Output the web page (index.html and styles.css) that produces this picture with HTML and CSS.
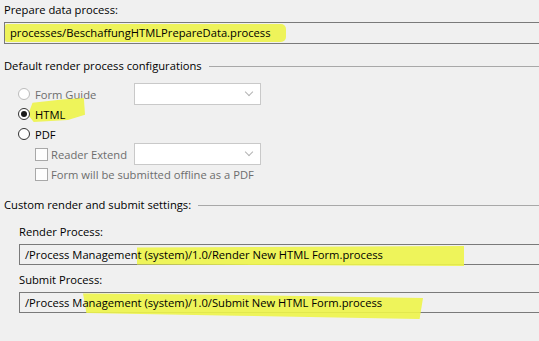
FILE: index.html
```html
<!DOCTYPE html>
<html lang="en">
<head>
    <meta charset="UTF-8">
    <title>Process settings</title>
    <link rel="stylesheet" href="styles.css">
</head>
<body>

    <main class="panel">
        <div class="label">Prepare data process:</div>
        <div class="textbox">
            <span class="mark mark-prepare"></span>
            <span class="value">processes/BeschaffungHTMLPrepareData.process</span>
        </div>

        <section class="group group-render">
            <div class="group-title"><span>Default render process configurations</span><i class="rule"></i></div>
            <div class="options">
                <div class="row">
                    <span class="radio disabled"></span>
                    <span class="opt-text disabled-text">Form Guide</span>
                    <span class="combo"><i class="chevron"></i></span>
                </div>
                <div class="row">
                    <span class="mark mark-html"></span>
                    <span class="radio checked"></span>
                    <span class="opt-text">HTML</span>
                </div>
                <div class="row">
                    <span class="radio"></span>
                    <span class="opt-text">PDF</span>
                </div>
                <div class="row sub">
                    <span class="check"></span>
                    <span class="opt-text disabled-text reader">Reader Extend</span>
                    <span class="combo"><i class="chevron"></i></span>
                </div>
                <div class="row sub">
                    <span class="check"></span>
                    <span class="opt-text disabled-text">Form will be submitted offline as a PDF</span>
                </div>
            </div>
        </section>

        <section class="group group-custom">
            <div class="group-title"><span>Custom render and submit settings:</span><i class="rule"></i></div>
            <div class="inner">
                <div class="label">Render Process:</div>
                <div class="textbox">
                    <span class="mark mark-render"></span>
                    <span class="value">/Process Management (system)/1.0/Render New HTML Form.process</span>
                </div>
                <div class="label label-submit">Submit Process:</div>
                <div class="textbox">
                    <span class="mark mark-submit"></span>
                    <span class="value">/Process Management (system)/1.0/Submit New HTML Form.process</span>
                </div>
            </div>
        </section>
    </main>

</body>
</html>
```
FILE: styles.css
```css
:root {
    --bg-color: #f0f0f0;
    --text-color: #000000;
    --muted-color: #6d6d6d;
    --box-border: #7a7a7a;
    --rule-color: #a8a8a8;
    --combo-border: #c9c9c9;
    --marker: #eef44a;
    --font-main: 'Open Sans', 'Noto Sans', sans-serif;
}

html, body {
    margin: 0;
    height: 100%;
    overflow: hidden;
    background-color: var(--bg-color);
    color: var(--text-color);
    font-family: var(--font-main);
    font-size: 11.2px;
}

.panel {
    padding: 2px 0 0 4px;
}

.label {
    height: 16px;
    line-height: 16px;
}

.textbox {
    position: relative;
    margin-top: 4px;
    height: 20px;
    border: 1px solid var(--box-border);
    border-right: none;
    line-height: 20px;
    padding-left: 5px;
    white-space: nowrap;
}

.value {
    position: relative;
}

/* marker highlights painted over by hand in the screenshot */
.mark {
    position: absolute;
    background-color: var(--marker);
    opacity: 0.9;
    filter: blur(0.6px);
}

.mark-prepare {
    left: 0;
    top: 1px;
    width: 281px;
    height: 18px;
    border-radius: 2px 5px 5px 2px;
}

.mark-html {
    left: 10px;
    top: -6px;
    width: 57px;
    height: 24px;
    clip-path: polygon(8% 20%, 60% 6%, 98% 0, 100% 70%, 70% 92%, 10% 100%, 0 70%);
}

.mark-render {
    left: 117px;
    top: 1px;
    width: 327px;
    height: 20px;
    clip-path: polygon(0 8%, 100% 0, 100% 100%, 0 92%);
}

.mark-submit {
    left: 63px;
    top: -1px;
    width: 340px;
    height: 27px;
    clip-path: polygon(0 6%, 40% 10%, 100% 22%, 99% 100%, 45% 88%, 1% 78%);
}

.group-title {
    display: flex;
    align-items: center;
    height: 16px;
    line-height: 16px;
    margin-top: 14px;
}

.group-title span {
    white-space: nowrap;
}

.rule {
    flex: 1;
    height: 1px;
    margin-left: 7px;
    margin-top: 1px;
    background-color: var(--rule-color);
}

.options {
    margin-top: 10px;
    padding-left: 14px;
}

.row {
    position: relative;
    display: flex;
    align-items: center;
    height: 20px;
}

.row.sub {
    padding-left: 17px;
}

.radio {
    position: relative;
    box-sizing: border-box;
    width: 12px;
    height: 12px;
    border: 1px solid #333333;
    border-radius: 50%;
    background-color: #ffffff;
}

.radio.disabled {
    border-color: #bcbcbc;
}

.radio.checked::after {
    content: "";
    position: absolute;
    left: 2px;
    top: 2px;
    width: 6px;
    height: 6px;
    border-radius: 50%;
    background-color: #1a1a1a;
}

.check {
    box-sizing: border-box;
    width: 13px;
    height: 13px;
    border: 1px solid #a8a8a8;
    background-color: #fdfdfd;
}

.opt-text {
    position: relative;
    margin-left: 5px;
    white-space: nowrap;
}

.row.sub .opt-text {
    margin-left: 3px;
}

.disabled-text {
    color: var(--muted-color);
}

.combo {
    position: absolute;
    left: 116px;
    top: -1px;
    box-sizing: border-box;
    width: 127px;
    height: 22px;
    border: 1px solid var(--combo-border);
    background-color: #ffffff;
}

.chevron {
    position: absolute;
    right: 8px;
    top: 5px;
    width: 5px;
    height: 5px;
    border-right: 1px solid #b4b4b4;
    border-bottom: 1px solid #b4b4b4;
    transform: rotate(45deg);
}

.group-custom .group-title {
    margin-top: 13px;
}

.inner {
    padding-left: 15px;
    margin-top: 11px;
}

.label-submit {
    margin-top: 7px;
}

.inner .textbox {
    height: 19px;
    line-height: 19px;
}
```
